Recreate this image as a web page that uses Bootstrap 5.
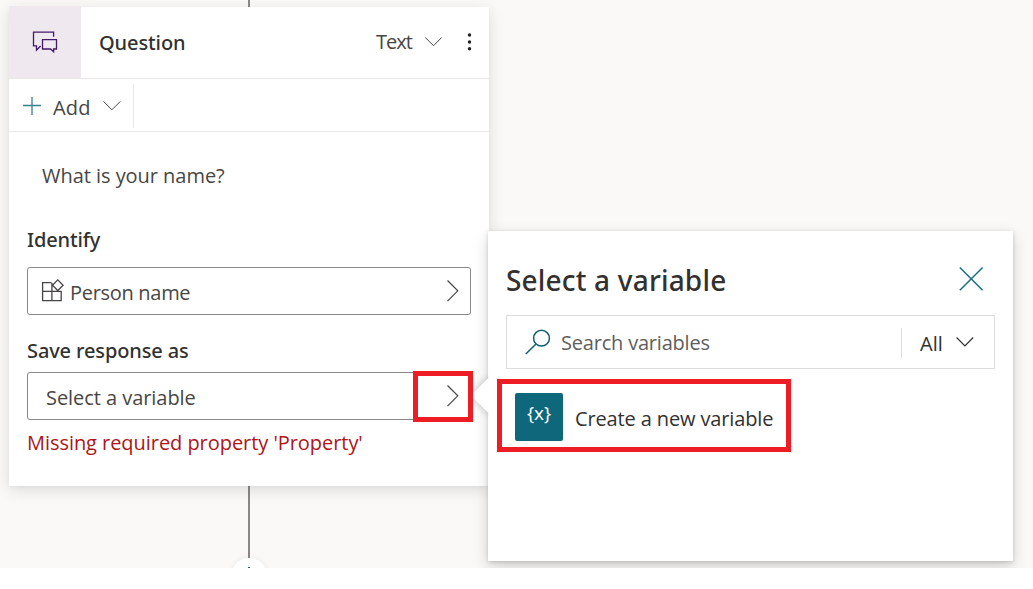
<!DOCTYPE html>
<html lang="en">
<head>
<meta charset="utf-8">
<title>Question node</title>
<meta name="viewport" content="width=device-width, initial-scale=1">
<link href="https://cdn.jsdelivr.net/npm/bootstrap@5.3.0/dist/css/bootstrap.min.css" rel="stylesheet">
<style>
  body { font: 400 20px/28px "Open Sans", "Noto Sans", sans-serif; color: #484644; background: #fff; overflow: hidden; }
  svg { display: block; flex: none; fill: none; stroke: currentColor; }
  .canvas { height: 568px; background: #faf9f8; }
  .semi { font-family: "Noto Sans", "Open Sans", sans-serif; font-weight: 500; color: #323130; }
  .ink { color: #323130; }

  /* connector between nodes */
  .wire { left: 248px; width: 2px; background: #8a8886; }
  .wire-top { top: 0; height: 8px; }
  .wire-bottom { top: 486px; height: 74px; }
  .add-node { left: 231px; top: 558px; width: 36px; height: 36px; box-shadow: 0 0 6px rgba(0,0,0,.07); color: #0f6479; }

  /* question node */
  .node { left: 9px; top: 7px; width: 480px; height: 479px; box-shadow: 0 4px 15px rgba(0,0,0,.12), 0 1px 3px rgba(0,0,0,.03); }
  .node-head { height: 72px; border-bottom: 1px solid #e9e8e7; }
  .node-icon { width: 72px; height: 72px; margin-top: -1px; background: #efe8ef; color: #43196a; }
  .node-name { padding: 22px 0 0 18px; letter-spacing: -.1px; }
  .node-kind { padding-top: 21px; }
  .node-kind span { letter-spacing: -.95px; }
  .node-kind svg { margin: -1px 4px 0 9px; }
  .toolbar { height: 53px; border-bottom: 1px solid #e9e8e7; }
  .add-btn { width: 125px; margin: 5px 0 3px; border-right: 1px solid #e9e8e7; padding: 0 0 0 14px; gap: 12px; }
  .add-btn span { padding-top: 3px; letter-spacing: .15px; }
  .plus { color: #3a7f90; }
  .message { padding: 30px 33px 0; letter-spacing: -.04px; }
  .node-form { padding: 36px 18px 0; }
  .form-name { letter-spacing: -.12px; }
  .field { height: 48px; border: 1px solid #8a8886; border-radius: 3px; padding: 0 10px 0 12px; }
  .field svg { margin-top: -1px; }
  .field span { padding-top: 3px; }
  .field-identify { margin: 13px 0 22px; }
  .field-save { margin-top: 7px; }
  .error-text { color: #ad1519; letter-spacing: -.05px; margin-top: 9px; }
  .highlight { border: 5px solid #ee1c24; pointer-events: none; }
  .highlight-chevron { left: 413px; top: 371px; width: 60px; height: 51px; z-index: 3; }

  /* variable picker */
  .picker { left: 488px; top: 231px; width: 525px; height: 330px; padding: 0 18px; box-shadow: 0 6px 15px rgba(0,0,0,.16), 0 1px 4px rgba(0,0,0,.16); z-index: 2; }
  .picker-beak { left: -12px; top: 152px; width: 25px; height: 25px; transform: rotate(45deg); box-shadow: 0 0 8px rgba(0,0,0,.25); clip-path: polygon(-40% 140%, -40% -40%, 140% 140%); z-index: -1; }
  .picker-head { padding-top: 31px; }
  .picker-title { font-size: 28px; line-height: 36px; letter-spacing: .18px; }
  .close-x { margin: 4px 11px 0 0; color: #147087; }
  .search { height: 54px; margin-top: 17px; border: 1px solid #dcdcdc; padding-left: 18px; }
  .lens { color: #155f73; }
  .search-hint { color: #605e5c; letter-spacing: -.2px; margin-left: 10px; padding-top: 2px; }
  .scope { height: 30px; border-left: 1px solid #dcdcdc; width: 93px; margin-top: 2px; padding-left: 18px; }
  .scope span { padding-top: 1px; }
  .scope svg { margin: -3px 0 0 13px; }
  .create { width: 294px; height: 73px; margin: 10px 0 0 -9px; padding: 1px 0 0 13px; letter-spacing: -.13px; }
  .create span { margin-left: 12px; padding-top: 6px; }
  .var-tile { width: 48px; height: 48px; margin-top: 1px; border-radius: 2px; background: #0f677b; color: #fff; font-size: 19px; line-height: 41px; }
</style>
</head>
<body>
<main class="canvas position-relative overflow-hidden">
  <div class="wire wire-top position-absolute"></div>
  <div class="wire wire-bottom position-absolute"></div>
  <div class="add-node position-absolute bg-white rounded-circle d-flex justify-content-center">
    <svg width="12" height="24" viewBox="0 0 12 24" stroke-width="2"><path d="M6 9v14"/></svg>
  </div>

  <section class="node position-absolute bg-white">
    <header class="node-head d-flex align-items-start">
      <div class="node-icon d-flex">
        <svg width="72" height="72" viewBox="9 6 72 72" stroke-width="1.3"><path d="M53.6 36.8v-4.6H33.5v13.6h3v4.4l4.1-4.2M42.5 39.7h14v9.3h-2.900v2.800l-3-2.800h-8.100z"/></svg>
      </div>
      <div class="semi node-name">Question</div>
      <div class="node-kind d-flex ms-auto align-items-start">
        <span>Text</span>
        <svg width="64" height="28" viewBox="421 27 64 28" stroke-width="1"><path d="m425.300 37.500 8.200 8.200 8.200-8.200"/><g fill="#201f1e" stroke="none"><circle cx="469.500" cy="35" r="1.700"/><circle cx="469.500" cy="42" r="1.700"/><circle cx="469.500" cy="48.700" r="1.700"/></g></svg>
      </div>
    </header>
    <div class="toolbar d-flex">
      <div class="add-btn d-flex align-items-center">
        <svg class="plus" width="18" height="18" viewBox="0 0 18 18" stroke-width="1.300"><path d="M0 8.500h18M9 0v18"/></svg>
        <span>Add</span>
        <svg width="18" height="12" viewBox="0 0 18 12" stroke-width="1"><path d="m.6 1.500 8.300 8.300 8.300-8.300"/></svg>
      </div>
    </div>
    <div class="message">What is your name?</div>
    <div class="node-form">
      <div class="semi form-name">Identify</div>
      <div class="field field-identify d-flex align-items-center">
        <svg width="24" height="26" viewBox="40 278 24 26" stroke-width="1.300"><path d="M51.300 282.700h-8.700v18h18.600v-9.300H42.600M51.900 282.700v18M57.800 279.900l5.300 5.300-5.300 5.300-5.300-5.300z"/></svg>
        <span style="margin-left:6px;letter-spacing:-.3px">Person name</span>
        <svg class="ms-auto" width="14" height="24" viewBox="0 0 14 24" stroke-width="1.200"><path d="m1.500 1.500 10.300 10.300L1.500 22.100"/></svg>
      </div>
      <div class="semi form-name">Save response as</div>
      <div class="field field-save d-flex align-items-center">
        <span style="margin-left:6px;letter-spacing:-.05px">Select a variable</span>
        <svg class="ms-auto" width="14" height="24" viewBox="0 0 14 24" stroke-width="1.200"><path d="m1.500 1.500 10.300 10.300L1.500 22.100"/></svg>
      </div>
      <div class="error-text">Missing required property 'Property'</div>
    </div>
  </section>

  <section class="picker position-absolute bg-white">
    <div class="picker-beak position-absolute bg-white"></div>
    <header class="picker-head d-flex justify-content-between">
      <div class="semi picker-title">Select a variable</div>
      <svg class="close-x" width="26" height="26" viewBox="0 0 26 26" stroke-width="1.500"><path d="m1.800 1.500 22.800 22.800M24.600 1.500 1.800 24.300"/></svg>
    </header>
    <div class="search d-flex align-items-center">
      <svg class="lens" width="26" height="26" viewBox="0 0 26 26" stroke-width="1.500"><circle cx="16.500" cy="9.200" r="7.900"/><path d="M11 15 .8 25"/></svg>
      <span class="search-hint">Search variables</span>
      <div class="scope ink ms-auto d-flex align-items-center">
        <span>All</span>
        <svg width="18" height="12" viewBox="0 0 18 12" stroke-width="1.200"><path d="m.6 1.500 8.300 8.300 8.300-8.300"/></svg>
      </div>
    </div>
    <div class="create highlight d-flex align-items-center">
      <div class="var-tile text-center">{x}</div>
      <span class="ink">Create a new variable</span>
    </div>
  </section>

  <div class="highlight highlight-chevron position-absolute"></div>
</main>
<script src="https://cdn.jsdelivr.net/npm/bootstrap@5.3.0/dist/js/bootstrap.bundle.min.js"></script>
</body>
</html>
